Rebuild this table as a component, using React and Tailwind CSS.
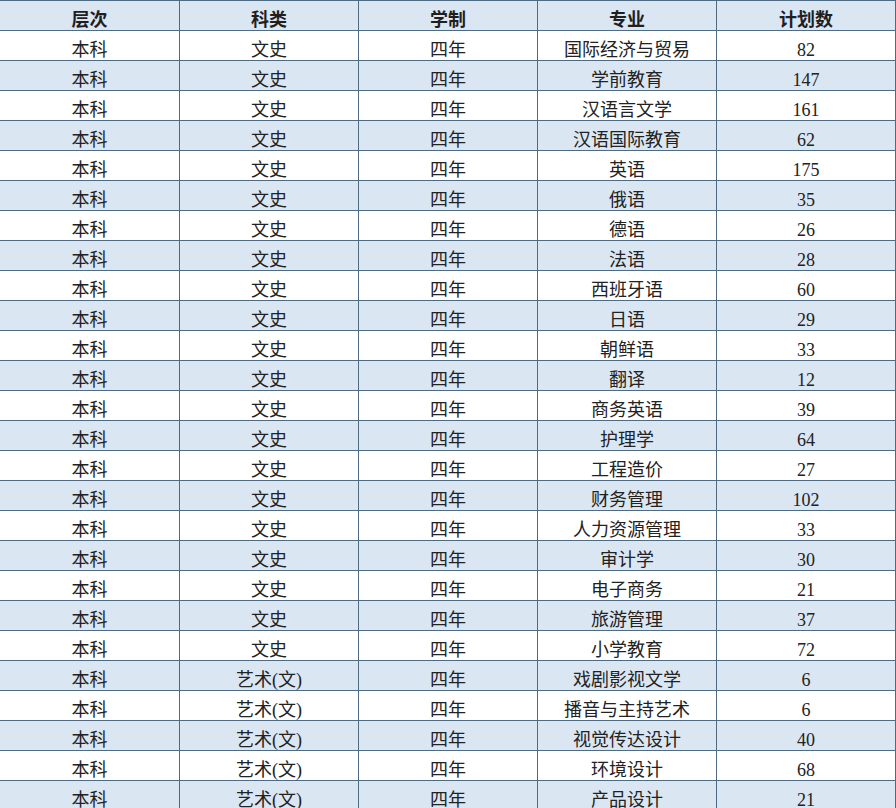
const rows = [
  ['本科', '文史', '四年', '国际经济与贸易', '82'],
  ['本科', '文史', '四年', '学前教育', '147'],
  ['本科', '文史', '四年', '汉语言文学', '161'],
  ['本科', '文史', '四年', '汉语国际教育', '62'],
  ['本科', '文史', '四年', '英语', '175'],
  ['本科', '文史', '四年', '俄语', '35'],
  ['本科', '文史', '四年', '德语', '26'],
  ['本科', '文史', '四年', '法语', '28'],
  ['本科', '文史', '四年', '西班牙语', '60'],
  ['本科', '文史', '四年', '日语', '29'],
  ['本科', '文史', '四年', '朝鲜语', '33'],
  ['本科', '文史', '四年', '翻译', '12'],
  ['本科', '文史', '四年', '商务英语', '39'],
  ['本科', '文史', '四年', '护理学', '64'],
  ['本科', '文史', '四年', '工程造价', '27'],
  ['本科', '文史', '四年', '财务管理', '102'],
  ['本科', '文史', '四年', '人力资源管理', '33'],
  ['本科', '文史', '四年', '审计学', '30'],
  ['本科', '文史', '四年', '电子商务', '21'],
  ['本科', '文史', '四年', '旅游管理', '37'],
  ['本科', '文史', '四年', '小学教育', '72'],
  ['本科', '艺术(文)', '四年', '戏剧影视文学', '6'],
  ['本科', '艺术(文)', '四年', '播音与主持艺术', '6'],
  ['本科', '艺术(文)', '四年', '视觉传达设计', '40'],
  ['本科', '艺术(文)', '四年', '环境设计', '68'],
  ['本科', '艺术(文)', '四年', '产品设计', '21'],
]

const headers = ['层次', '科类', '学制', '专业', '计划数']

function Cell({ children, bold, bg }) {
  return (
    <div
      className={`h-[30px] flex items-center justify-center pt-[9px] border-r border-b border-[#4f6b84] text-[18px] leading-none ${bg} ${
        bold ? 'font-bold text-[#1f1f1f]' : 'text-[#222]'
      }`}
    >
      {children}
    </div>
  )
}

export default function App() {
  return (
    <div
      className="w-[896px] h-[808px] overflow-hidden bg-white"
      style={{ fontFamily: '"Liberation Serif", "Noto Sans CJK SC", serif' }}
    >
      <div className="grid grid-cols-[180px_179px_179px_179px_179px] border-t border-[#4f6b84]">
        {headers.map((h) => (
          <Cell key={h} bold bg="bg-[#dbe6f3]">
            {h}
          </Cell>
        ))}
        {rows.map((r, i) =>
          r.map((c, j) => (
            <Cell key={i + '-' + j} bg={i % 2 === 1 ? 'bg-[#dbe6f3]' : 'bg-white'}>
              {c}
            </Cell>
          ))
        )}
      </div>
    </div>
  )
}
